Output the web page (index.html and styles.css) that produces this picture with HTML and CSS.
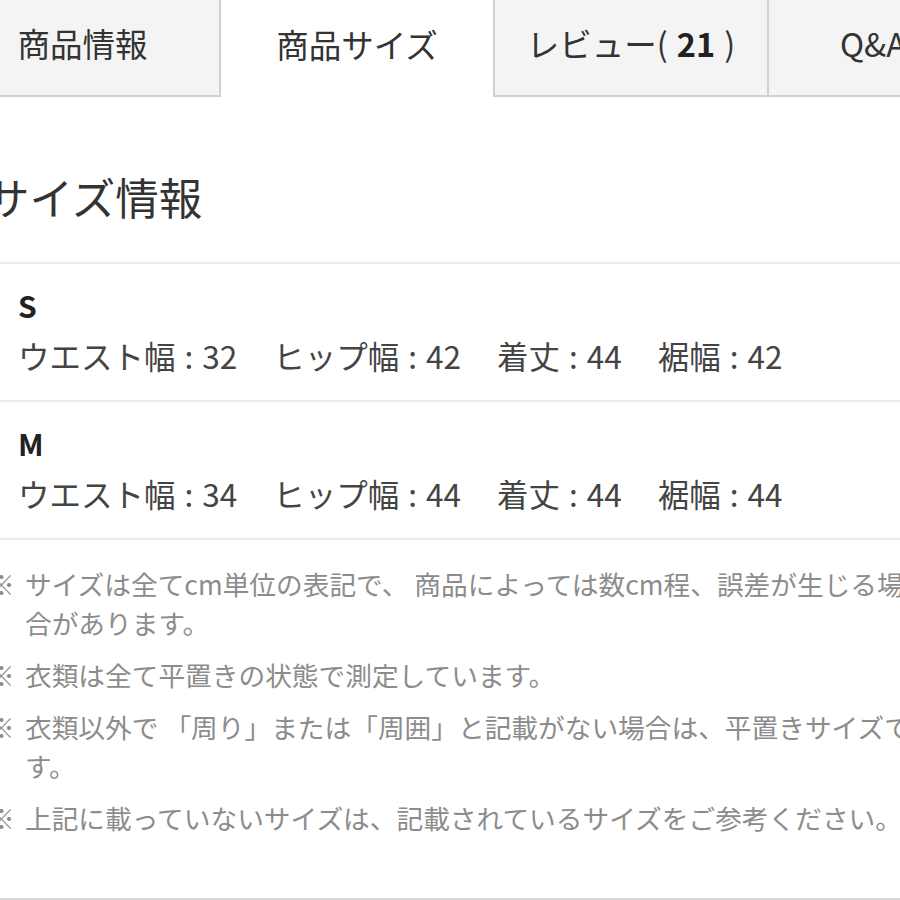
FILE: index.html
```html
<!DOCTYPE html>
<html lang="ja">
<head>
<meta charset="utf-8">
<title>商品サイズ</title>
<link rel="stylesheet" href="styles.css">
</head>
<body>
<div class="page">
  <nav class="tabs">
    <div class="tab tab-info"><span>商品情報</span></div>
    <div class="tab tab-active"><span>商品サイズ</span></div>
    <div class="tab tab-review"><span>レビュー(<span class="gap"></span><b>21</b><span class="gap"></span>)</span></div>
    <div class="tab tab-qa"><span>Q&amp;A</span></div>
  </nav>

  <h2 class="heading">サイズ情報</h2>

  <section class="sizes">
    <div class="size">
      <div class="size-name">S</div>
      <div class="size-values">
        <span class="val">ウエスト幅<span class="sep">:</span>32</span>
        <span class="val">ヒップ幅<span class="sep">:</span>42</span>
        <span class="val">着丈<span class="sep">:</span>44</span>
        <span class="val">裾幅<span class="sep">:</span>42</span>
      </div>
    </div>
    <div class="size">
      <div class="size-name">M</div>
      <div class="size-values">
        <span class="val">ウエスト幅<span class="sep">:</span>34</span>
        <span class="val">ヒップ幅<span class="sep">:</span>44</span>
        <span class="val">着丈<span class="sep">:</span>44</span>
        <span class="val">裾幅<span class="sep">:</span>44</span>
      </div>
    </div>
  </section>

  <ul class="notes">
    <li class="note"><span class="mark">※</span><span class="note-text">サイズは全てcm単位の表記で、 商品によっては数cm程、誤差が生じる場合があります。</span></li>
    <li class="note"><span class="mark">※</span><span class="note-text">衣類は全て平置きの状態で測定しています。</span></li>
    <li class="note"><span class="mark">※</span><span class="note-text">衣類以外で 「周り」または「周囲」と記載がない場合は、平置きサイズです。</span></li>
    <li class="note"><span class="mark">※</span><span class="note-text">上記に載っていないサイズは、記載されているサイズをご参考ください。</span></li>
  </ul>
</div>
</body>
</html>
```

FILE: styles.css
```css
html, body {
  margin: 0;
  padding: 0;
  overflow: hidden;
  background: #ffffff;
}

body {
  font-family: "Noto Sans CJK JP", "Noto Sans", sans-serif;
  color: #333333;
}

.page {
  width: 915px;
}

/* Tabs */
.tabs {
  display: flex;
  margin-left: -54px;
  height: 97px;
  width: 1200px;
}

.tab {
  box-sizing: border-box;
  flex: 0 0 auto;
  height: 97px;
  display: flex;
  align-items: center;
  justify-content: center;
  padding-bottom: 10px;
  font-size: 32.5px;
  color: #333333;
  background: #f4f4f4;
  border-bottom: 2px solid #d0d0d0;
  white-space: nowrap;
}

.tab b {
  font-weight: 700;
  color: #222222;
}

.gap {
  display: inline-block;
  width: 9px;
}

.tab-info {
  width: 275px;
  border-right: 2px solid #d0d0d0;
}

.tab-active {
  width: 272px;
  background: #ffffff;
  border-bottom: none;
}

.tab-review {
  width: 276px;
  border-left: 2px solid #d0d0d0;
  border-right: 2px solid #d0d0d0;
}

.tab-qa {
  width: 300px;
  justify-content: flex-start;
  padding-left: 71px;
}

/* Heading */
.heading {
  margin: 70px 0 35px -14px;
  font-size: 43.5px;
  line-height: 60px;
  font-weight: 400;
  color: #333333;
}

/* Sizes */
.sizes {
  border-top: 2px solid #ebebeb;
}

.size {
  padding: 16px 0 20px 18px;
  border-bottom: 2px solid #ebebeb;
}

.size-name {
  font-size: 30px;
  line-height: 50px;
  font-weight: 700;
  color: #222222;
}

.size-values {
  display: flex;
  font-size: 31.5px;
  line-height: 50px;
  color: #444444;
  white-space: nowrap;
}

.val {
  margin-right: 36px;
}

.sep {
  margin: 0 9px;
}

/* Notes */
.notes {
  list-style: none;
  margin: 0;
  padding: 24px 0 48px 0;
  border-bottom: 2px solid #d8d8d8;
  width: 1000px;
}

.note {
  display: flex;
  font-size: 26.7px;
  line-height: 39px;
  color: #8c8c8c;
  margin-bottom: 13px;
  width: 915px;
}

.mark {
  flex: 0 0 37px;
  margin-left: -12px;
}

.note-text {
  flex: 1;
}
```
